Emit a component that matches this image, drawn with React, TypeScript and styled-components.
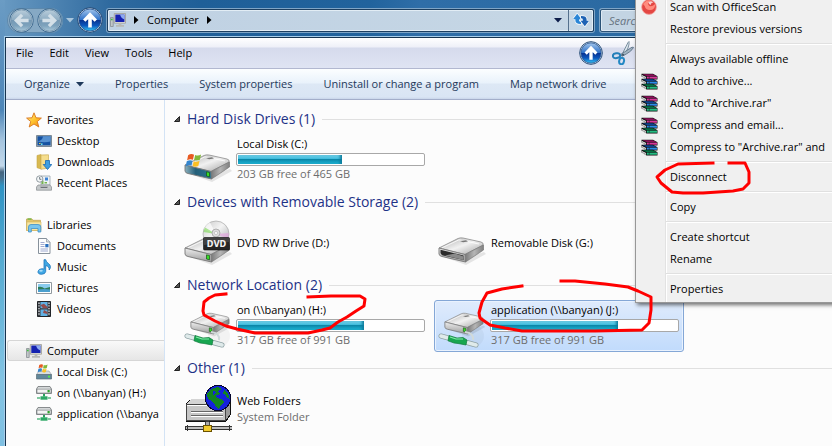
import React from "react";
import styled, { createGlobalStyle, css } from "styled-components";

const GlobalStyle = createGlobalStyle`
  *, *::before, *::after { box-sizing: border-box; }
  body {
    margin: 0;
    font-family: "Open Sans", "Noto Sans", sans-serif;
    font-size: 11px;
    line-height: 16px;
    color: #000;
  }
  button, input { font: inherit; color: inherit; }
  button { border: 0; padding: 0; background: none; cursor: default; }
  svg { display: block; flex: none; }
`;

/* ---------- Frame ---------- */

const Desktop = styled.div`
  position: relative;
  display: flex;
  flex-direction: column;
  min-height: 100vh;
  overflow: hidden;
  padding-left: 4px;
  background:
    linear-gradient(180deg, #6b9cc4 0, #5a8fbd 60px, #4d86b8 110px, #a5c4de 140px, #c3d8ea 166px, #44647f 172px, #47718f 178px, #2f93c4 186px, #55abd2 260px, #83c4e4 380px, #7fc0e2 100%)
      left top / 5px 100% no-repeat,
    linear-gradient(90deg, #6a9bc3 0, #2f6a9f 110px, #1f5f98 200px, #21639d 370px, #2f6ea8 420px, #2b6aa2 620px, #25639a 100%);
`;

const TitleBar = styled.header`
  display: flex;
  align-items: center;
  height: 37px;
  padding: 3px 6px 0 3px;
`;

const NavButtons = styled.div`
  display: flex;
  align-items: center;
  width: 96px;
  margin-right: 4px;
`;

const NavPair = styled.div`
  display: flex;
  border-radius: 13px;
  background: #86a9c4;
  box-shadow: inset 0 0 0 1px #5c88ac;
`;

const NavButton = styled.button<{ $width: number }>`
  display: flex;
  justify-content: center;
  width: ${(p) => p.$width}px;
`;

const AddressBar = styled.div`
  display: flex;
  align-items: center;
  flex: 1;
  min-width: 0;
  height: 23px;
  margin-right: 6px;
  padding-left: 2px;
  border: 1px solid #1d3f60;
  border-radius: 2px;
  background: linear-gradient(90deg, #bfd1e3, #c6d7e5);
  box-shadow: inset 0 0 0 1px #e2edf5, 0 0 0 1px #7fa5c6;
`;

const Crumb = styled.button`
  padding: 0 8px;
  color: #111;
`;

const AddressTools = styled.div`
  display: flex;
  align-items: center;
  align-self: stretch;
  margin-left: auto;
`;

const AddressTool = styled.button<{ $divided?: boolean }>`
  display: flex;
  align-items: center;
  justify-content: center;
  align-self: stretch;
  width: ${(p) => (p.$divided ? 25 : 20)}px;
  ${(p) => p.$divided && css`border-left: 1px solid #55718d;`}
`;

const SearchInput = styled.input`
  width: 226px;
  height: 23px;
  padding: 0 8px;
  border: 1px solid #2b5276;
  border-radius: 2px;
  background: #c3d4e3;
  box-shadow: inset 0 0 0 1px #dde9f3, 0 0 0 1px #7fa5c6;
  font-style: italic;
  &::placeholder { color: #66727f; opacity: 1; }
`;

const Window = styled.div`
  flex: 1;
  display: flex;
  flex-direction: column;
  border: solid #17344f;
  border-width: 1px 0 0 1px;
  margin-left: 1px;
  box-shadow: 0 0 0 1px #a6cdea;
  background: #fcfcfc;
`;

const MenuBar = styled.nav`
  display: flex;
  align-items: center;
  gap: 16px;
  height: 31px;
  padding: 0 8px 0 10px;
  border-bottom: 1px solid #b2b8d0;
  background: linear-gradient(180deg, #fff 0, #eef0f8 9px, #d5daec 10px, #dfe4f3 100%);
`;

const MenuIcons = styled.div`
  display: flex;
  align-items: center;
  gap: 9px;
  width: 245px;
  margin-left: auto;
`;

const CommandBar = styled.div`
  display: flex;
  align-items: center;
  height: 31px;
  gap: 31px;
  padding: 0 18px;
  border-bottom: 1px solid #a3aeca;
  background: linear-gradient(180deg, #fcfeff 0, #e9f2fb 14px, #dde8f5 15px, #d9e5f4 28px, #c9d6ea 100%);
  color: #1e395b;
  white-space: nowrap;
`;

const Command = styled.button`
  display: flex;
  align-items: center;
  gap: 6px;
`;

const Body = styled.div`
  flex: 1;
  display: flex;
  min-height: 0;
`;

/* ---------- Sidebar ---------- */

const Sidebar = styled.nav`
  display: flex;
  flex-direction: column;
  gap: 21px;
  flex: none;
  width: 159px;
  padding: 9px 0 0 1px;
  border-right: 1px solid #d3e3f5;
`;

const TreeGroup = styled.div`
  display: flex;
  flex-direction: column;
`;

const TreeLink = styled.a<{ $child?: boolean; $selected?: boolean }>`
  display: flex;
  align-items: center;
  gap: 5px;
  height: 21px;
  padding-left: ${(p) => (p.$child ? 28 : 18)}px;
  border: 1px solid transparent;
  border-right: 0;
  color: #000;
  text-decoration: none;
  white-space: nowrap;
  overflow: hidden;
  ${(p) =>
    p.$selected &&
    css`
      border-color: #d6d6d6;
      border-radius: 3px 0 0 3px;
      background: linear-gradient(180deg, #f9f9f9, #e6e6e6);
    `}
`;

/* ---------- Content ---------- */

const Content = styled.main`
  flex: 1;
  min-width: 0;
  padding: 8px 0 0 9px;
`;

const Section = styled.section`
  margin-bottom: 5px;
`;

const SectionHeader = styled.div`
  display: flex;
  align-items: center;
  gap: 7px;
  height: 22px;
  margin-bottom: 4px;
`;

const SectionTitle = styled.h2`
  margin: 0;
  font-size: 14px;
  line-height: 22px;
  font-weight: 400;
  color: #1e3287;
  white-space: nowrap;
`;

const Rule = styled.div`
  flex: 1;
  height: 1px;
  background: #e0e0e0;
`;

const Tiles = styled.div`
  display: flex;
  gap: 4px;
  padding-left: 6px;
`;

const Tile = styled.button<{ $selected?: boolean }>`
  display: flex;
  align-items: center;
  gap: 4px;
  width: 250px;
  height: 52px;
  padding-left: 3px;
  border: 1px solid transparent;
  border-radius: 3px;
  text-align: left;
  ${(p) =>
    p.$selected &&
    css`
      border-color: #84a7d6;
      background: linear-gradient(180deg, #dfebfc, #c1dbfc);
      box-shadow: inset 0 0 0 1px #e9f2fe;
    `}
`;

const TileText = styled.span<{ $metered?: boolean }>`
  display: flex;
  flex-direction: column;
  flex: 1;
  min-width: 0;
  padding: 0 4px ${(p) => (p.$metered ? 2 : 0)}px 0;
`;

const TileName = styled.span`
  line-height: 16px;
  padding-left: 1px;
`;

const TileNote = styled.span`
  line-height: 16px;
  padding-left: 1px;
  color: #6d6d6d;
`;

const Meter = styled.span`
  display: block;
  height: 13px;
  margin-top: 1px;
  padding: 1px;
  border: 1px solid #a8a8a8;
  border-radius: 2px;
  background: #fff;
`;

const MeterFill = styled.span`
  display: block;
  height: 100%;
  background: linear-gradient(180deg, #7ad5ec 0, #39b9da 45%, #0b87a8 50%, #16a3c4 80%, #1fb5d4 100%);
  box-shadow: inset -3px 0 3px -1px #0d7c9c;
`;

/* ---------- Context menu ---------- */

const ContextMenu = styled.div`
  position: absolute;
  top: -7px;
  left: 635px;
  right: -24px;
  padding: 2px;
  border: 1px solid #979797;
  background: linear-gradient(90deg, #f0f0f0 29px, #e2e2e2 29px, #e2e2e2 30px, #fff 30px, #fff 31px, #f0f0f0 31px);
  box-shadow: 2px 2px 4px #00000090;
`;

const ContextItem = styled.button`
  display: flex;
  align-items: center;
  gap: 12px;
  width: 100%;
  height: 22px;
  padding-left: 3px;
  white-space: nowrap;
`;

const IconSlot = styled.span`
  width: 17px;
  flex: none;
`;

const Separator = styled.hr`
  height: 2px;
  margin: 3px 0 3px 28px;
  border: solid #e0e0e0;
  border-width: 1px 0 0;
  background: #fff;
`;

const Markup = styled.svg`
  position: absolute;
  left: 0;
  top: 0;
  pointer-events: none;
`;

/* ---------- Icons ---------- */

const Orb = ({ dim, size, turn = 0 }: { dim?: boolean; size: number; turn?: number }) => {
  const id = `orb-${dim ? "d" : "b"}-${size}-${turn}`;
  return (
    <svg width={size} height={size} viewBox="0 0 26 26">
      <defs>
        <linearGradient id={id} x1="0" y1="0" x2="0" y2="1">
          <stop offset="0" stopColor={dim ? "#b9cddb" : "#a3c6ec"} />
          <stop offset=".48" stopColor={dim ? "#8cabc1" : "#2f72c9"} />
          <stop offset=".5" stopColor={dim ? "#7498b4" : "#07318f"} />
          <stop offset=".75" stopColor={dim ? "#7ea3bd" : "#0c57bd"} />
          <stop offset="1" stopColor={dim ? "#a9c8da" : "#35c7f5"} />
        </linearGradient>
      </defs>
      <circle cx="13" cy="13" r="12.3" fill={dim ? "#b7cddc" : "#d7e8f6"} stroke={dim ? "#3c688e" : "#1f4470"} />
      <circle cx="13" cy="13" r="11" fill={`url(#${id})`} stroke={dim ? "#7595ae" : "#234f8b"} strokeWidth=".8" />
      <path
        d="M13 5.2 20 12.4 17.6 14.8 14.8 12V20.4H11.2V12L8.4 14.8 6 12.4Z"
        transform={`rotate(${turn} 13 13)`}
        fill={dim ? "#d4e0e8" : "#fff"}
      />
    </svg>
  );
};

const Arrow = ({ down, color = "#000" }: { down?: boolean; color?: string }) => (
  <svg width={down ? 8 : 5} height={down ? 5 : 8} viewBox={down ? "0 0 8 5" : "0 0 5 8"}>
    <path d={down ? "M0 0H8L4 4.5Z" : "M0 0V8L4.5 4Z"} fill={color} />
  </svg>
);

const ExpandMark = () => (
  <svg width="6" height="6" viewBox="0 0 6 6">
    <path d="M5.5.5V5.5H.5Z" fill="#555" stroke="#222" />
  </svg>
);

const RefreshIcon = () => (
  <svg width="16" height="14" viewBox="0 0 16 14">
    <path d="M0 6.2 4.2.8 8.4 6.2H6.2V7.6Q6.2 8.8 8 8.8V11Q2.4 11.2 2.4 7.6V6.2Z" fill="#2b86d6" stroke="#f2f8fc" strokeWidth="1.6" paintOrder="stroke" />
    <path d="M16 7.8 11.8 13.2 7.6 7.8H9.8V6.4Q9.8 5.2 8 5.2V3Q13.6 2.8 13.6 6.4V7.8Z" fill="#1d62b4" stroke="#f2f8fc" strokeWidth="1.6" paintOrder="stroke" />
  </svg>
);

const ScissorsIcon = () => (
  <svg width="22" height="24" viewBox="0 0 22 24">
    <path d="M9.5 14.5 16 1.5 17 .5Q18 5 12 14.5Z" fill="#dce6ed" stroke="#60788c" strokeWidth=".8" />
    <path d="M9 13.2 20 6.2 21.5 6.4Q19.5 10.8 10 15.2Z" fill="#a3b5c3" stroke="#526a7e" strokeWidth=".8" />
    <ellipse cx="4.5" cy="14.7" rx="3.7" ry="2.4" transform="rotate(-10 4.5 14.7)" fill="none" stroke="#237fb9" strokeWidth="2" />
    <ellipse cx="9.6" cy="20" rx="2.4" ry="3.3" transform="rotate(12 9.6 20)" fill="none" stroke="#2388c4" strokeWidth="2" />
    <circle cx="11" cy="13.7" r="1" fill="#3b5264" />
  </svg>
);

const ComputerIcon = () => (
  <svg width="16" height="16" viewBox="0 0 16 16">
    <path d="M.5 5.5H3.2V14.5H.5Z" fill="#c2c6c9" stroke="#888e93" strokeWidth=".8" />
    <path d="M1 7.5H2.6" stroke="#3ac63a" strokeWidth="1.6" />
    <path d="M4.3 1.5H15.5V11.2H4.3Z" fill="#e3e3df" stroke="#9b9b94" strokeWidth=".8" />
    <path d="M5.3 2.5H14.5V10H5.3Z" fill="#1522b0" />
    <path d="M10 2.5H14.5V7.5Q11 6.5 10 2.5Z" fill="#8daaf0" />
    <path d="M8.6 11.2H11.4V13H14V14.7H6V13H8.6Z" fill="#b8b9b5" />
  </svg>
);

const StarIcon = () => (
  <svg width="16" height="16" viewBox="0 0 16 16">
    <defs>
      <linearGradient id="star" x1="0" y1="0" x2="1" y2="1">
        <stop offset="0" stopColor="#fff0a0" />
        <stop offset=".5" stopColor="#ffc52e" />
        <stop offset="1" stopColor="#f08316" />
      </linearGradient>
    </defs>
    <path d="M8 .8 10 5.8 15.4 6.1 11.3 9.5 12.8 15 8 12 3.2 15 4.7 9.5.6 6.1 6 5.8Z" fill="url(#star)" stroke="#d9761c" strokeWidth=".9" strokeLinejoin="round" />
  </svg>
);

const DesktopIcon = () => (
  <svg width="16" height="16" viewBox="0 0 16 16">
    <path d="M.5 2.5H15.5V13.5H.5Z" fill="#9aa9b5" stroke="#7c8a96" />
    <path d="M1.5 3.3H14.5V12.3H1.5Z" fill="#1552a2" />
    <path d="M7 3.3H14.5V8.5Q9 10 1.5 8.5Q6.5 7.5 7 3.3Z" fill="#5590d0" />
    <path d="M3 10.2 4.5 9.7V11H3Z" fill="#ffd43e" />
    <path d="M5 10.5 6.5 10.2V12H5Z" fill="#6ce0ed" />
  </svg>
);

const DownloadsIcon = () => (
  <svg width="16" height="16" viewBox="0 0 16 16">
    <path d="M1 1.5 5 .5V15L1 13.7Z" fill="#d8b951" stroke="#c6a544" strokeWidth=".6" />
    <path d="M5 1 12.5.8V14L5 15.3Z" fill="#f5dd8c" stroke="#cbae55" strokeWidth=".7" />
    <path d="M9.5 6.5H13.5V10.5H15.8L11.5 15.5 7.2 10.5H9.5Z" fill="#3d9ee0" stroke="#1767b3" strokeWidth=".8" />
  </svg>
);

const RecentIcon = () => (
  <svg width="16" height="16" viewBox="0 0 16 16">
    <path d="M5 1H14V10H5Z" fill="#eef3f6" stroke="#9ba6ae" strokeWidth=".8" />
    <path d="M9 2.5H12V5.5H9Z" fill="#3c83d5" />
    <path d="M5.5 5.5H7.5V9H5.5ZM8.5 7H11V8.5H8.5Z" fill="#74b44e" />
    <path d="M2 10H14L15.5 12V15.2H.5V12Z" fill="#c4c8ca" stroke="#858a8e" strokeWidth=".7" />
    <path d="M4 11.7H12L11 13H5Z" fill="#6c7277" />
    <circle cx="3.7" cy="4" r="3.2" fill="#f4f7f8" stroke="#899299" strokeWidth=".9" />
    <path d="M3.7 2V4.3H5.4" fill="none" stroke="#4f5c66" strokeWidth=".8" />
  </svg>
);

const LibrariesIcon = () => (
  <svg width="16" height="16" viewBox="0 0 16 16">
    <path d="M.5 2H6L7 3.3H14.5V13.5H.5Z" fill="#e2c569" stroke="#c2a14c" strokeWidth=".7" />
    <path d="M1.5 1.2H5.5V3H1.5Z" fill="#88b94e" />
    <path d="M.8 5H15V13.5H.8Z" fill="#f8e6a2" stroke="#d1b35c" strokeWidth=".6" />
    <path d="M2.5 15V10Q2.5 7.5 5 7.5H12Q14.8 7.5 14.8 10V15H12V11.5H5.3V15Z" fill="#78c5ee" stroke="#3f8fc7" strokeWidth=".8" />
  </svg>
);

const DocumentIcon = () => (
  <svg width="16" height="16" viewBox="0 0 16 16">
    <path d="M2.5.5H10.5L14 4V15.5H2.5Z" fill="#fcfdfe" stroke="#87919b" />
    <path d="M10.5.5V4H14" fill="#dde4e9" stroke="#87919b" strokeWidth=".7" />
    <path d="M4.5 4.5H8.5M4.5 6.5H8.5M4.5 8.5H8.5M4.5 11H12M4.5 13H12" stroke="#96a2cd" strokeWidth=".9" />
    <path d="M9.3 6H12.5V9.3H9.3Z" fill="#286dbe" />
  </svg>
);

const MusicIcon = () => (
  <svg width="16" height="16" viewBox="0 0 16 16">
    <path d="M8 .7H9.7Q10 3 12.5 4.5Q16 7.3 13.2 11Q13.5 7.5 9.7 6.5V12.5Q9.3 15.2 5.5 15.3Q1.7 15.2 2 12.5Q2.6 9.7 6.2 9.7Q7.3 9.7 8 10.2Z" fill="#3fa7e4" stroke="#1c74ba" strokeWidth=".8" />
    <ellipse cx="5" cy="11.8" rx="1.8" ry="1" fill="#a6dbf7" />
  </svg>
);

const PicturesIcon = () => (
  <svg width="16" height="16" viewBox="0 0 16 16">
    <path d="M.5 2.5H15.5V13.5H.5Z" fill="#fff" stroke="#90989e" />
    <path d="M2 4H14V12H2Z" fill="#8accee" />
    <path d="M2 7Q6 6 8.5 8.5L14 7V10H2Z" fill="#2e7d59" />
    <path d="M2 9.5Q8 8.5 14 9.5V12H2Z" fill="#4b9fce" />
  </svg>
);

const VideosIcon = () => (
  <svg width="16" height="16" viewBox="0 0 16 16">
    <path d="M1.5.5H14.5V15.5H1.5Z" fill="#383c42" stroke="#212428" />
    <path d="M4.5 1H11.5V7.3H4.5ZM4.5 8.6H11.5V15H4.5Z" fill="#62b1e4" />
    <path d="M4.5 4 8 2.8 11.5 6V7.3H7ZM8 9 11.5 11V13L7 12Z" fill="#934c4c" />
    <path d="M3 1.5V15M13 1.5V15" stroke="#e5e8ea" strokeWidth="1.2" strokeDasharray="1.4 1.3" />
  </svg>
);

const Flag = () => (
  <g>
    <path d="M1 2Q3.5.3 6.3 1.5L5.3 6Q3 4.9.1 6.4Z" fill="#e85a22" />
    <path d="M7.3 1.8Q10 2.9 12.6 1.4L11.5 6Q9 7.3 6.3 6.3Z" fill="#82b83a" />
    <path d="M-.2 7.4Q2.6 5.9 5 7L4 11.4Q1.7 10.4-1.2 12Z" fill="#3586ce" />
    <path d="M6 7.3Q8.6 8.4 11.2 7L10.1 11.5Q7.7 12.8 5 11.7Z" fill="#fbbf24" />
  </g>
);

const SmallDiskIcon = () => (
  <svg width="16" height="16" viewBox="0 0 16 16">
    <path d="M3 7H13L15.5 10.5H.5Z" fill="#d9dddf" stroke="#8d9498" strokeWidth=".6" />
    <path d="M.5 10.5H15.5V15H.5Z" fill="#62889b" stroke="#596e78" strokeWidth=".7" />
    <path d="M12 11.7H14V13.5H12Z" fill="#52ea49" />
    <g transform="translate(2.5 -.4) scale(.72)"><Flag /></g>
  </svg>
);

const SmallNetDriveIcon = () => (
  <svg width="16" height="16" viewBox="0 0 16 16">
    <path d="M2 1.5H14L15.5 4V8.5H.5V4Z" fill="#d5d8d9" stroke="#6e7476" strokeWidth=".8" />
    <path d="M1 4.2H15V8H1Z" fill="#f4f4f4" stroke="#777c7f" strokeWidth=".6" />
    <path d="M11.5 5H13.7V7.3H11.5Z" fill="#2ba329" />
    <path d="M7 9H9V11.5H7Z" fill="#29a35a" />
    <path d="M4.5 11.3H11.5V14.7H4.5Z" fill="#2da865" />
    <path d="M1 12H4.5V14H1ZM11.5 12H15V14H11.5Z" fill="#80c9a0" />
  </svg>
);

const DiskGradients = () => (
  <svg width="0" height="0" aria-hidden="true">
    <defs>
      <linearGradient id="diskTop" x1="0" y1="0" x2="1" y2="1">
        <stop offset="0" stopColor="#a8a8a8" />
        <stop offset=".5" stopColor="#f1f1f1" />
        <stop offset="1" stopColor="#a0a0a0" />
      </linearGradient>
      <linearGradient id="diskSide" x1="0" y1="0" x2="1" y2="0">
        <stop offset="0" stopColor="#787878" />
        <stop offset=".5" stopColor="#b5b5b5" />
        <stop offset="1" stopColor="#808080" />
      </linearGradient>
      <linearGradient id="diskFront" x1="0" y1="0" x2="0" y2="1">
        <stop offset="0" stopColor="#eee" />
        <stop offset="1" stopColor="#9c9c9c" />
      </linearGradient>
      <linearGradient id="disc" x1="0" y1="0" x2="1" y2="1">
        <stop offset="0" stopColor="#c8c8c8" />
        <stop offset=".45" stopColor="#f3f3f3" />
        <stop offset="1" stopColor="#a2a6a9" />
      </linearGradient>
      <linearGradient id="diskBlue" x1="0" y1="0" x2="1" y2="0">
        <stop offset="0" stopColor="#8bb0bd" />
        <stop offset=".4" stopColor="#245f79" />
        <stop offset="1" stopColor="#2b7591" />
      </linearGradient>
    </defs>
  </svg>
);

const DriveBody = ({ front = "url(#diskFront)", led = true }: { front?: string; led?: boolean }) => (
  <g>
    <path d="M3 37 28 46 48 35 46 33 24 40Z" fill="#00000018" />
    <path d="M1 29 20 19.5Q22 18.5 25 19L43 23Q46 24 45 26L27 35.5Z" fill="url(#diskTop)" stroke="#8c8c8c" strokeWidth=".8" />
    <path d="M27 35.5 45.5 26V31L27.5 43Z" fill="url(#diskSide)" stroke="#777" strokeWidth=".7" />
    <path d="M1 29 27 35.5 27.5 43 4 37.5Q1.3 37 1 35Z" fill={front} stroke="#777" strokeWidth=".9" />
    <path d="M4 28.8 21 20.8 41 25" fill="none" stroke="#fff" strokeWidth="1" opacity=".8" />
    <path d="M22 22 28 21.3 30 22.5 25 23.3Z" fill="#777" />
    {led && <path d="M22.5 35.8 25.5 36.5V40.8L22.5 40Z" fill="#38dc26" stroke="#174f18" strokeWidth=".7" />}
  </g>
);

const LocalDiskIcon = () => (
  <svg width="48" height="48" viewBox="0 0 48 48">
    <DriveBody front="url(#diskBlue)" />
    <g transform="translate(3 17) scale(1.12)"><Flag /></g>
  </svg>
);

const DvdIcon = () => (
  <svg width="48" height="48" viewBox="0 0 48 48">
    <DriveBody />
    <circle cx="32" cy="15" r="13" fill="url(#disc)" stroke="#a8a8a8" strokeWidth=".7" />
    <path d="M32 15 19.8 10.5Q22 5 26 3.6Z" fill="#ffffffb0" />
    <path d="M32 15 19.5 13Q20 10 21 8.5Z" fill="#7ed957a0" />
    <path d="M32 15 44.8 14Q45 17 44 20Z" fill="#e49adf90" />
    <circle cx="32" cy="14" r="4" fill="#ddd" stroke="#9a9a9a" strokeWidth=".7" />
    <circle cx="32" cy="14" r="1.6" fill="#fafafa" stroke="#aaa" strokeWidth=".5" />
    <rect x="19.5" y="18.5" width="26" height="12.5" rx="1" fill="#252525" stroke="#111" strokeWidth=".6" />
    <path d="M20 19H45V23Q32 24 20 26Z" fill="#ffffff20" />
    <text x="32.5" y="28" textAnchor="middle" fontFamily="DejaVu Sans" fontWeight="700" fontSize="8" fill="#f2f2f2">DVD</text>
  </svg>
);

const RemovableIcon = () => (
  <svg width="48" height="48" viewBox="0 0 48 48">
    <DriveBody led={false} />
    <path d="M2.5 30.8 25.5 36.6 25.8 41 5 36.4Q3 36 2.5 34Z" fill="#2c2c2c" />
    <path d="M7 36.6 17 34.4 25.6 37.6V41Z" fill="#8a8a8a" />
  </svg>
);

const NetDriveIcon = () => (
  <svg width="48" height="48" viewBox="0 0 48 48">
    <circle cx="35" cy="34" r="11" fill="#00000009" />
    <g transform="translate(6 -5) scale(.86)"><DriveBody /></g>
    <path d="M27 30Q36 31 35 38" fill="none" stroke="#d1dada" strokeWidth="2" />
    <path d="M3 34 12 36.5M29 40.5 38 43" stroke="#8fa2a5" strokeWidth="5" strokeLinecap="round" />
    <path d="M3 34 12 36.5M29 40.5 38 43" stroke="#dfeaea" strokeWidth="3.6" strokeLinecap="round" />
    <path d="M11 33.5 19 36 25 35.5 29 38 28 43 20 41.5 16 41 10 38.8Z" fill="#18a650" stroke="#0e7b3b" strokeWidth=".7" />
    <path d="M12 35 18 37 25 37" fill="none" stroke="#86eaaa" strokeWidth="1.2" />
  </svg>
);

const WebFoldersIcon = () => (
  <svg width="48" height="48" viewBox="0 0 48 48" shapeRendering="crispEdges">
    <path d="M2 19 8 14H46V30L42 36H2Z" fill="#9b9b9b" stroke="#111" />
    <path d="M2 19 8 14H45L41 19Z" fill="#d4d4d4" />
    <path d="M2 19H41V35H2Z" fill="#c6c6c6" stroke="#444" />
    <path d="M3 20H40" stroke="#fff" />
    <path d="M7 26H39M7 30H39" stroke="#666" />
    <path d="M7 27H39M7 31H39" stroke="#fff" />
    <path d="M21 36H25V41H21Z" fill="#aaa" stroke="#222" strokeWidth=".8" />
    <path d="M1 41.5H48V44.5H1Z" fill="#bdbdbd" stroke="#222" strokeWidth=".9" />
    <path d="M19 40H27V46H19Z" fill="#f2cb2f" stroke="#6c5200" />
    <path d="M3 40V46M45 40V46" stroke="#333" />
    <circle cx="34" cy="13" r="12.6" fill="#1421dd" stroke="#05052d" />
    <path d="M27 4 34 2 38 4 34 6 36 9 31 11 33 13 37 14 40 17 36 22 34 24 31 20 28 16 24 14 23 9Z" fill="#118421" />
    <path d="M40 5 44 8 46 14 43 13 42 10 39 9Z" fill="#118421" />
    <path d="M29 6 33 7 29 10Z" fill="#1421dd" />
  </svg>
);

const ScanIcon = () => (
  <svg width="16" height="16" viewBox="0 0 16 16">
    <circle cx="8" cy="8" r="7.4" fill="#e44743" stroke="#f3aaa5" strokeWidth=".8" />
    <path d="M2 5Q5 .5 10 1.3Q6 3 7.5 6Q9.5 9 14.3 5Q14 11 9 11Q4.5 11 3.7 7Z" fill="#ff8c7e" />
    <path d="M7.3 3Q10 1.2 12.5 3.6Q9.5 4 10 6Q7.5 5.5 7.3 3Z" fill="#fff" opacity=".75" />
  </svg>
);

const RarIcon = () => (
  <svg width="17" height="17" viewBox="0 0 17 17">
    {[
      { y: 0, light: "#d9379b", dark: "#8b0f5a" },
      { y: 5, light: "#2b8be8", dark: "#0e4390" },
      { y: 10, light: "#24be83", dark: "#067044" },
    ].map((b) => (
      <g key={b.y} transform={`translate(0 ${b.y})`}>
        <path d="M.5.8H12L16.5 3.2V6.5H5.5L.5 3.5Z" fill="#111" />
        <path d="M1.5 1.2H11.5L15.5 3H5.5Z" fill={b.dark} />
        <path d="M5.8 3.6H16V5.7H5.8Z" fill={b.light} />
        <path d="M.8 2 5 4.1V6L.8 3.9Z" fill="#fff" />
        <path d="M1 3.2 5 5.2" stroke="#555" strokeWidth=".6" />
        <path d="M7.5 3.6H9V5.7H7.5Z" fill="#00000055" />
      </g>
    ))}
  </svg>
);

/* ---------- Data ---------- */

type Node = { label: string; icon: React.ReactNode; selected?: boolean };

const tree: Node[][] = [
  [
    { label: "Favorites", icon: <StarIcon /> },
    { label: "Desktop", icon: <DesktopIcon /> },
    { label: "Downloads", icon: <DownloadsIcon /> },
    { label: "Recent Places", icon: <RecentIcon /> },
  ],
  [
    { label: "Libraries", icon: <LibrariesIcon /> },
    { label: "Documents", icon: <DocumentIcon /> },
    { label: "Music", icon: <MusicIcon /> },
    { label: "Pictures", icon: <PicturesIcon /> },
    { label: "Videos", icon: <VideosIcon /> },
  ],
  [
    { label: "Computer", icon: <ComputerIcon />, selected: true },
    { label: "Local Disk (C:)", icon: <SmallDiskIcon /> },
    { label: "on (\\\\banyan) (H:)", icon: <SmallNetDriveIcon /> },
    { label: "application (\\\\banya", icon: <SmallNetDriveIcon /> },
  ],
];

type Drive = { name: string; icon: React.ReactNode; note?: string; used?: number; selected?: boolean };

const sections: { title: string; drives: Drive[] }[] = [
  {
    title: "Hard Disk Drives (1)",
    drives: [{ name: "Local Disk (C:)", icon: <LocalDiskIcon />, note: "203 GB free of 465 GB", used: 56 }],
  },
  {
    title: "Devices with Removable Storage (2)",
    drives: [
      { name: "DVD RW Drive (D:)", icon: <DvdIcon /> },
      { name: "Removable Disk (G:)", icon: <RemovableIcon /> },
    ],
  },
  {
    title: "Network Location (2)",
    drives: [
      { name: "on (\\\\banyan) (H:)", icon: <NetDriveIcon />, note: "317 GB free of 991 GB", used: 68 },
      { name: "application (\\\\banyan) (J:)", icon: <NetDriveIcon />, note: "317 GB free of 991 GB", used: 68, selected: true },
    ],
  },
  { title: "Other (1)", drives: [{ name: "Web Folders", icon: <WebFoldersIcon />, note: "System Folder" }] },
];

const contextGroups: { label: string; icon?: React.ReactNode }[][] = [
  [{ label: "Scan with OfficeScan", icon: <ScanIcon /> }, { label: "Restore previous versions" }],
  [
    { label: "Always available offline" },
    { label: "Add to archive...", icon: <RarIcon /> },
    { label: 'Add to "Archive.rar"', icon: <RarIcon /> },
    { label: "Compress and email...", icon: <RarIcon /> },
    { label: 'Compress to "Archive.rar" and', icon: <RarIcon /> },
  ],
  [{ label: "Disconnect" }],
  [{ label: "Copy" }],
  [{ label: "Create shortcut" }, { label: "Rename" }],
  [{ label: "Properties" }],
];

/* ---------- App ---------- */

export default function App() {
  return (
    <Desktop>
      <GlobalStyle />
      <TitleBar>
        <NavButtons>
          <NavPair>
            <NavButton $width={28} aria-label="Back"><Orb dim size={25} turn={-90} /></NavButton>
            <NavButton $width={28} aria-label="Forward"><Orb dim size={25} turn={90} /></NavButton>
          </NavPair>
          <NavButton $width={13} aria-label="Recent locations"><Arrow down color="#a9c6dd" /></NavButton>
          <NavButton $width={27} aria-label="Up"><Orb size={26} /></NavButton>
        </NavButtons>
        <AddressBar>
          <ComputerIcon />
          <Crumb aria-label="Root"><Arrow /></Crumb>
          <span>Computer</span>
          <Crumb aria-label="Computer contents"><Arrow /></Crumb>
          <AddressTools>
            <AddressTool aria-label="Previous locations"><Arrow down color="#0d1d4a" /></AddressTool>
            <AddressTool $divided aria-label="Refresh"><RefreshIcon /></AddressTool>
          </AddressTools>
        </AddressBar>
        <SearchInput type="search" aria-label="Search Computer" placeholder="Search Computer" />
      </TitleBar>
      <Window>
        <MenuBar>
          {["File", "Edit", "View", "Tools", "Help"].map((m) => <button key={m}>{m}</button>)}
          <MenuIcons>
            <button aria-label="Up one level"><Orb size={24} /></button>
            <button aria-label="Cut"><ScissorsIcon /></button>
          </MenuIcons>
        </MenuBar>
        <CommandBar>
          <Command>Organize <Arrow down color="#1e395b" /></Command>
          {["Properties", "System properties", "Uninstall or change a program", "Map network drive"].map((c) => (
            <Command key={c}>{c}</Command>
          ))}
        </CommandBar>
        <Body>
          <Sidebar>
            {tree.map((group) => (
              <TreeGroup key={group[0].label}>
                {group.map((n, i) => (
                  <TreeLink key={n.label} href="#" $child={i > 0} $selected={n.selected}>
                    {n.icon}
                    {n.label}
                  </TreeLink>
                ))}
              </TreeGroup>
            ))}
          </Sidebar>
          <Content>
            {sections.map((s) => (
              <Section key={s.title}>
                <SectionHeader>
                  <ExpandMark />
                  <SectionTitle>{s.title}</SectionTitle>
                  <Rule />
                </SectionHeader>
                <Tiles>
                  {s.drives.map((d) => (
                    <Tile key={d.name} $selected={d.selected}>
                      {d.icon}
                      <TileText $metered={d.used !== undefined}>
                        <TileName>{d.name}</TileName>
                        {d.used !== undefined && (
                          <Meter role="progressbar" aria-label={`${d.name} space used`} aria-valuenow={d.used}>
                            <MeterFill style={{ width: `${d.used}%` }} />
                          </Meter>
                        )}
                        {d.note && <TileNote>{d.note}</TileNote>}
                      </TileText>
                    </Tile>
                  ))}
                </Tiles>
              </Section>
            ))}
          </Content>
        </Body>
      </Window>
      <ContextMenu role="menu">
        {contextGroups.map((group, g) => (
          <React.Fragment key={group[0].label}>
            {g > 0 && <Separator />}
            {group.map((item) => (
              <ContextItem key={item.label} role="menuitem">
                <IconSlot>{item.icon}</IconSlot>
                {item.label}
              </ContextItem>
            ))}
          </React.Fragment>
        ))}
      </ContextMenu>
      <Markup width="832" height="446" viewBox="0 0 832 446" fill="none" stroke="#f00" strokeWidth="3" strokeLinejoin="round" strokeLinecap="square">
        <path d="M226 294 215 295 209 298 204 302 203 311 204 315 215 321 226 326 237 329 255 333 308 333 322 330 330 328 338 322 347 317 356 311 364 306 365 299 360 296 331 296 308 297" />
        <path d="M522 286 502 289 487 293 482 302 479 313 480 318 490 325 505 328 522 331 595 331 642 330 649 323 651 310 651 297 638 291 628 287 605 284 575 281 561 281" />
        <path d="M713 163 678 164 665 170 657 177 661 183 672 192 683 193 703 193 733 191 743 189 749 183 749 172 745 163 729 163" />
      </Markup>
      <DiskGradients />
    </Desktop>
  );
}
